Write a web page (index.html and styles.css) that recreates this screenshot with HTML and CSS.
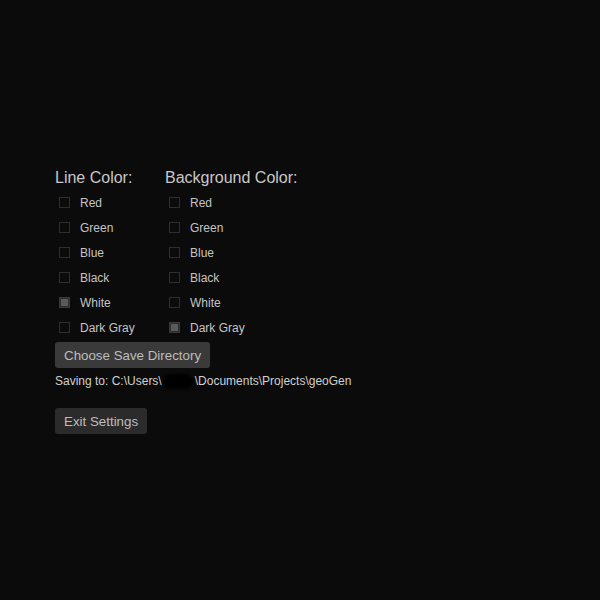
FILE: index.html
```html
<!DOCTYPE html>
<html>
<head>
<meta charset="utf-8">
<link rel="stylesheet" href="styles.css">
</head>
<body>
<div class="settings">
  <div class="columns">
    <div class="group line">
      <div class="heading">Line Color:</div>
      <label class="opt"><input type="checkbox"><span>Red</span></label>
      <label class="opt"><input type="checkbox"><span>Green</span></label>
      <label class="opt"><input type="checkbox"><span>Blue</span></label>
      <label class="opt"><input type="checkbox"><span>Black</span></label>
      <label class="opt"><input type="checkbox" checked><span>White</span></label>
      <label class="opt"><input type="checkbox"><span>Dark Gray</span></label>
    </div>
    <div class="group">
      <div class="heading">Background Color:</div>
      <label class="opt"><input type="checkbox"><span>Red</span></label>
      <label class="opt"><input type="checkbox"><span>Green</span></label>
      <label class="opt"><input type="checkbox"><span>Blue</span></label>
      <label class="opt"><input type="checkbox"><span>Black</span></label>
      <label class="opt"><input type="checkbox"><span>White</span></label>
      <label class="opt"><input type="checkbox" checked><span>Dark Gray</span></label>
    </div>
  </div>
  <button class="btn btn-save">Choose Save Directory</button>
  <div class="path">Saving to: C:\Users\<span class="redact"></span>\Documents\Projects\geoGen</div>
  <button class="btn btn-exit">Exit Settings</button>
</div>
</body>
</html>
```
FILE: styles.css
```css
html, body {
  margin: 0;
  padding: 0;
  background: #0b0b0b;
  height: 100%;
}
body {
  font-family: "Liberation Sans", Arial, sans-serif;
  color: #c8c8c8;
}
.settings {
  padding: 169px 0 0 55px;
  display: flex;
  flex-direction: column;
  align-items: flex-start;
}
.columns {
  display: flex;
}
.group {
  display: flex;
  flex-direction: column;
}
.group.line {
  width: 110px;
}
.heading {
  font-size: 16px;
  line-height: 18px;
  height: 18px;
  margin-bottom: 3px;
  color: #c8c8c8;
}
.opt {
  display: flex;
  align-items: center;
  height: 25px;
  padding-left: 4px;
  font-size: 12px;
  color: #c4c4c4;
}
.opt input {
  appearance: none;
  -webkit-appearance: none;
  margin: 0 10px 0 0;
  width: 11px;
  height: 11px;
  border: 1px solid #2e2e2e;
  background: transparent;
  box-sizing: border-box;
}
.opt input:checked {
  border-color: #3a3a3a;
  background: #5a5a5a;
  box-shadow: inset 0 0 0 1px #2e2e2e;
}
.btn {
  font-family: "Liberation Sans", Arial, sans-serif;
  font-size: 13.33px;
  height: 26px;
  padding: 0 9px;
  border: none;
  border-radius: 3px;
  color: #bdbdbd;
  cursor: pointer;
}
.btn-save {
  margin-top: 2px;
  background: #3a3a3a;
}
.btn-exit {
  margin-top: 20px;
  background: #2b2b2b;
}
.path {
  font-size: 12px;
  line-height: 14px;
  height: 14px;
  margin-top: 6px;
  color: #d0d0d0;
  display: flex;
  align-items: center;
}
.redact {
  display: inline-block;
  flex: none;
  width: 30px;
  height: 15px;
  margin: 0 2px 0 1px;
  background: #000;
  border-radius: 8px;
  filter: blur(1.5px);
}
```
